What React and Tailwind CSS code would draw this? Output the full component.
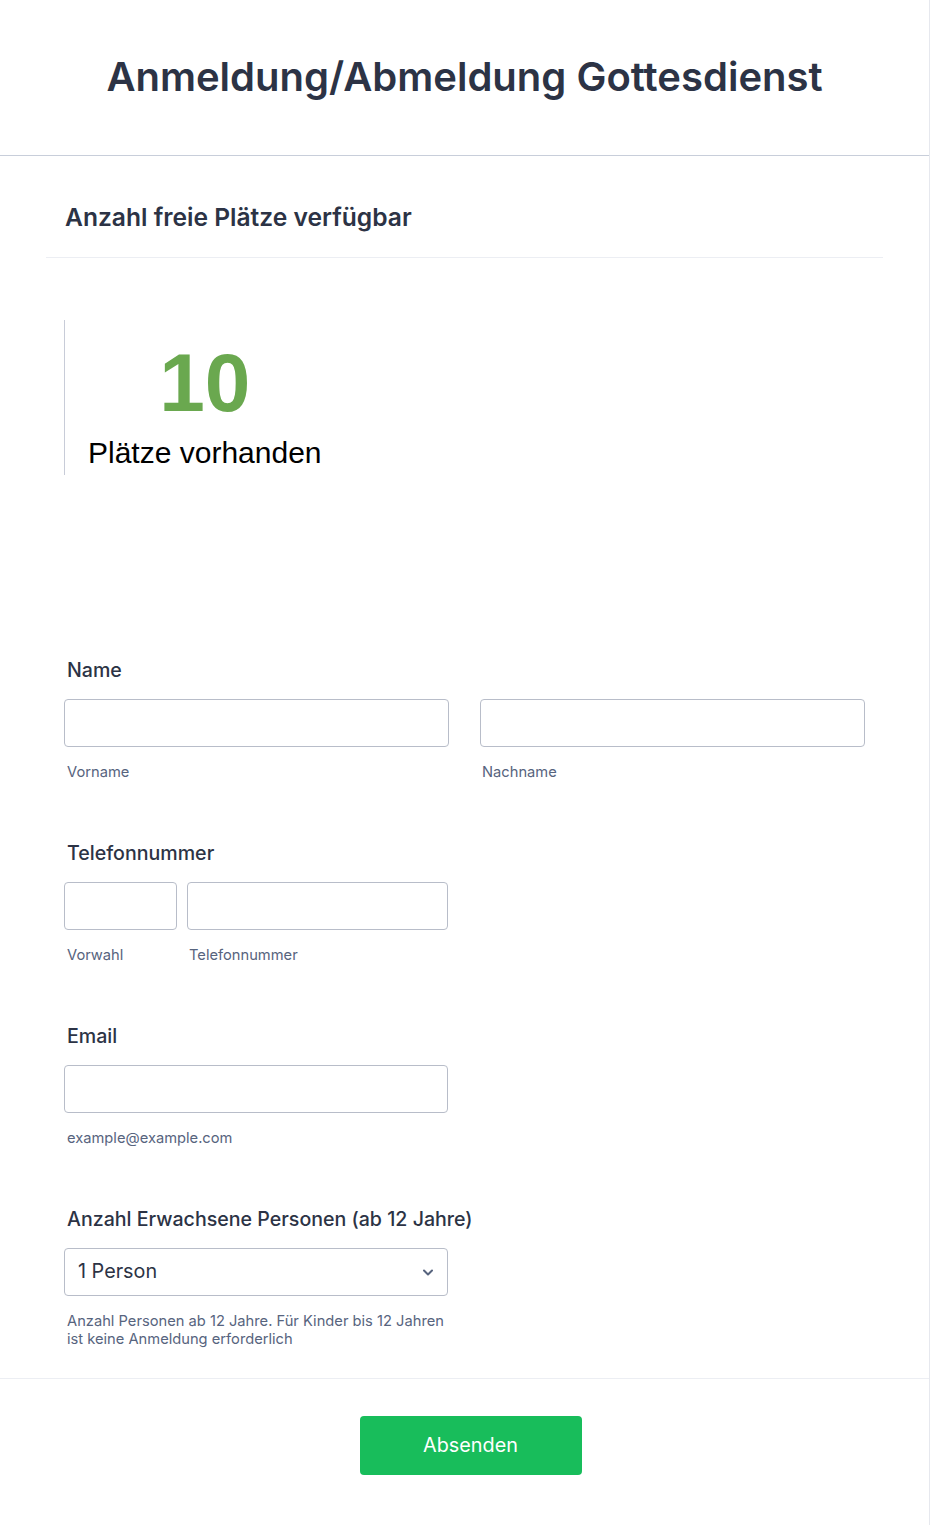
import React from 'react';

const inter = { fontFamily: 'Inter, "Noto Sans", sans-serif' };

function SubLabel({ children }) {
  return <div className="mt-[15px] text-[14.7px] leading-[20px] text-[#57647e]">{children}</div>;
}

function Label({ children }) {
  return <div className="pl-[3px] text-[19.6px] leading-[24px] font-medium text-[#2c3345]">{children}</div>;
}

function TextInput({ className = '' }) {
  return (
    <div
      className={`h-[48px] rounded-[4px] border border-[#b8bdc9] bg-white ${className}`}
    />
  );
}

export default function App() {
  return (
    <div className="w-[930px] min-h-[1525px] bg-white border-r border-[#e6e8ee]" style={inter}>
      {/* Header */}
      <div className="h-[156px] border-b border-[#c8ceda] flex items-center justify-center">
        <h1 className="text-[40px] leading-[48px] font-semibold text-[#2c3345] -mt-[2px]">
          Anmeldung/Abmeldung Gottesdienst
        </h1>
      </div>

      {/* Section header */}
      <div className="mx-[46px] pt-[46px] pb-[25px] border-b border-[#eceef3]">
        <h2 className="pl-[19px] text-[24.6px] leading-[30px] font-semibold text-[#2c3345]">
          Anzahl freie Plätze verfügbar
        </h2>
      </div>

      {/* Widget */}
      <div className="px-[64px] pt-[62px]">
        <div className="border-l border-[#c8ccd8] h-[155px] pt-[22px] pl-[23px]">
          <div
            className="inline-flex flex-col items-center"
            style={{ fontFamily: '"Liberation Sans", Arial, sans-serif' }}
          >
            <div className="text-[82px] leading-[82px] font-bold text-[#6aa84f]">10</div>
            <div className="mt-[11px] text-[30px] leading-[36px] text-black">Plätze vorhanden</div>
          </div>
        </div>
      </div>

      {/* Form */}
      <div className="px-[64px] pt-[183px]">
        {/* Name */}
        <Label>Name</Label>
        <div className="mt-[17px] flex gap-[31px]">
          <div className="w-[386px]">
            <TextInput />
            <div className="pl-[3px]"><SubLabel>Vorname</SubLabel></div>
          </div>
          <div className="w-[386px]">
            <TextInput />
            <div className="pl-[2px]"><SubLabel>Nachname</SubLabel></div>
          </div>
        </div>

        {/* Telefon */}
        <div className="mt-[59px]">
          <Label>Telefonnummer</Label>
          <div className="mt-[17px] flex gap-[10px]">
            <div className="w-[113px]">
              <TextInput />
              <div className="pl-[3px]"><SubLabel>Vorwahl</SubLabel></div>
            </div>
            <div className="w-[261px]">
              <TextInput />
              <div className="pl-[2px]"><SubLabel>Telefonnummer</SubLabel></div>
            </div>
          </div>
        </div>

        {/* Email */}
        <div className="mt-[59px]">
          <Label>Email</Label>
          <div className="mt-[17px] w-[384px]">
            <TextInput />
            <div className="pl-[3px]"><SubLabel>example@example.com</SubLabel></div>
          </div>
        </div>

        {/* Anzahl */}
        <div className="mt-[59px]">
          <Label>Anzahl Erwachsene Personen (ab 12 Jahre)</Label>
          <div className="mt-[17px] w-[384px]">
            <div className="h-[48px] rounded-[4px] border border-[#b8bdc9] bg-white flex items-center justify-between pl-[13px] pr-[12px]">
              <span className="text-[19.8px] text-[#2c3345]">1 Person</span>
              <svg width="14" height="14" viewBox="0 0 14 14" fill="none">
                <path
                  d="M3 5.5 L7 9.5 L11 5.5"
                  stroke="#57647e"
                  strokeWidth="2"
                  strokeLinecap="round"
                  strokeLinejoin="round"
                />
              </svg>
            </div>
            <div className="pl-[3px] mt-[16px] text-[14.7px] leading-[18px] text-[#57647e]">
              Anzahl Personen ab 12 Jahre. Für Kinder bis 12 Jahren
              <br />
              ist keine Anmeldung erforderlich
            </div>
          </div>
        </div>
      </div>

      {/* Footer */}
      <div className="mt-[30px] border-t border-[#eceef3] pt-[37px] pl-[12px] flex justify-center">
        <button className="w-[222px] h-[59px] rounded-[4px] bg-[#18bd5b] text-white text-[19.8px] leading-none">
          Absenden
        </button>
      </div>
    </div>
  );
}
